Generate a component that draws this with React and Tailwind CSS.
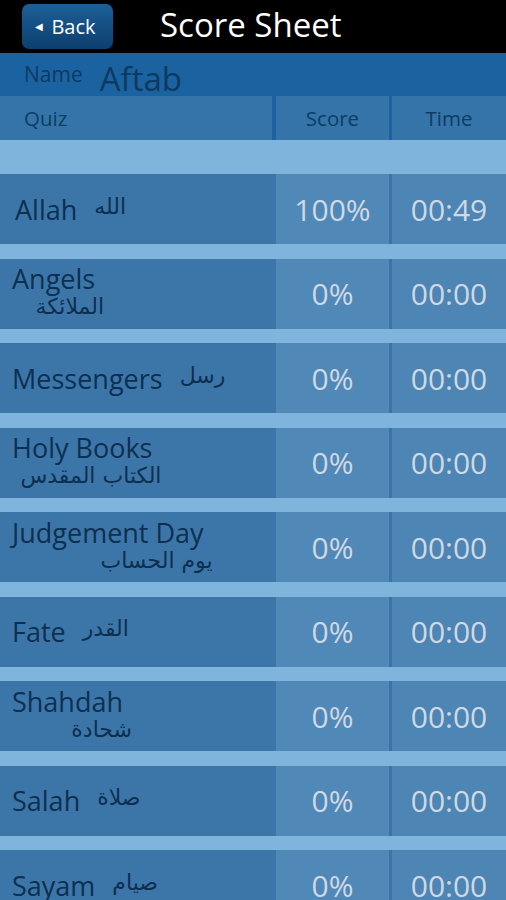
import React from 'react'

const rows = [
    { en: 'Allah', ar: 'الله', score: '100%', time: '00:49', single: true, first: true },
    { en: 'Angels', ar: 'الملائكة', score: '0%', time: '00:00' },
    { en: 'Messengers', ar: 'رسل', score: '0%', time: '00:00', single: true },
    { en: 'Holy Books', ar: 'الكتاب المقدس', score: '0%', time: '00:00' },
    { en: 'Judgement Day', ar: 'يوم الحساب', score: '0%', time: '00:00' },
    { en: 'Fate', ar: 'القدر', score: '0%', time: '00:00', single: true },
    { en: 'Shahdah', ar: 'شحادة', score: '0%', time: '00:00' },
    { en: 'Salah', ar: 'صلاة', score: '0%', time: '00:00', single: true },
    { en: 'Sayam', ar: 'صيام', score: '0%', time: '00:00', single: true },
]

const font = "font-['Open_Sans',sans-serif]"
const arFont = "font-['DejaVu_Sans','Noto_Sans',sans-serif]"

function Row({ r }) {
    return (
        <div className='flex h-[70px] shrink-0'>
            <div className='w-[276px] bg-[#3c76a9] flex items-center'>
                {r.single ? (
                    <div className={`flex items-center gap-[17px] ${r.first ? 'pl-[15px]' : 'pl-[12px]'}`}>
                        <span className='text-[27px] text-[#0d2f50] leading-none'>{r.en}</span>
                        <span dir='rtl' className={`${arFont} text-[22px] text-[#0d2f50] leading-none -mt-[5px]`}>{r.ar}</span>
                    </div>
                ) : (
                    <div className='inline-flex flex-col items-end pl-[12px] -mt-[3px]'>
                        <span className='self-start mr-[9px] text-[27px] text-[#0d2f50] leading-[30px]'>{r.en}</span>
                        <span dir='rtl' className={`${arFont} text-[22px] text-[#0d2f50] leading-[26px]`}>{r.ar}</span>
                    </div>
                )}
            </div>
            <div className='w-[113px] bg-[#5088b8] flex items-center justify-center text-[30px] text-[#cfd9e3]'>{r.score}</div>
            <div className='w-[3px] bg-[#3a74a8]'></div>
            <div className='flex-1 bg-[#4d85b5] flex items-center justify-center text-[30px] text-[#cfd9e3]'>{r.time}</div>
        </div>
    )
}

function App() {
    return (
        <div className={`${font} w-[506px] h-[900px] overflow-hidden bg-[#7fb5dc] flex flex-col`}>
            {/* top bar */}
            <div className='h-[53px] bg-black flex items-center shrink-0'>
                <button className='ml-[22px] w-[91px] h-[45px] rounded-[7px] bg-gradient-to-b from-[#1d5f98] to-[#0c3f6e] flex items-center justify-center gap-[8px] pr-[4px] text-white'>
                    <span className='text-[10px]'>◀</span>
                    <span className='text-[20px] font-medium'>Back</span>
                </button>
                <h1 className='ml-[47px] -mt-[4px] text-white text-[33px] leading-none'>Score Sheet</h1>
            </div>

            {/* name */}
            <div className='h-[43px] bg-[#1b63a0] flex items-start pl-[24px] gap-[17px] shrink-0 text-[#0d3a62]'>
                <span className='mt-[11px] text-[21px] leading-none'>Name</span>
                <span className='mt-[9px] text-[33px] font-medium leading-none'>Aftab</span>
            </div>

            {/* column headers */}
            <div className='h-[44px] flex shrink-0 text-[20.5px] text-[#0e3c63]'>
                <div className='w-[272px] bg-[#3474a9] flex items-center pl-[24px]'>Quiz</div>
                <div className='w-[4px] bg-[#1c61a0]'></div>
                <div className='w-[113px] bg-[#3474a9] flex items-center justify-center'>Score</div>
                <div className='w-[3px] bg-[#1c61a0]'></div>
                <div className='flex-1 bg-[#3474a9] flex items-center justify-center'>Time</div>
            </div>

            <div className='h-[34px] shrink-0'></div>

            <div className='flex flex-col gap-[14.5px]'>
                {rows.map((r) => (
                    <Row key={r.en} r={r} />
                ))}
            </div>
        </div>
    )
}

export default App
